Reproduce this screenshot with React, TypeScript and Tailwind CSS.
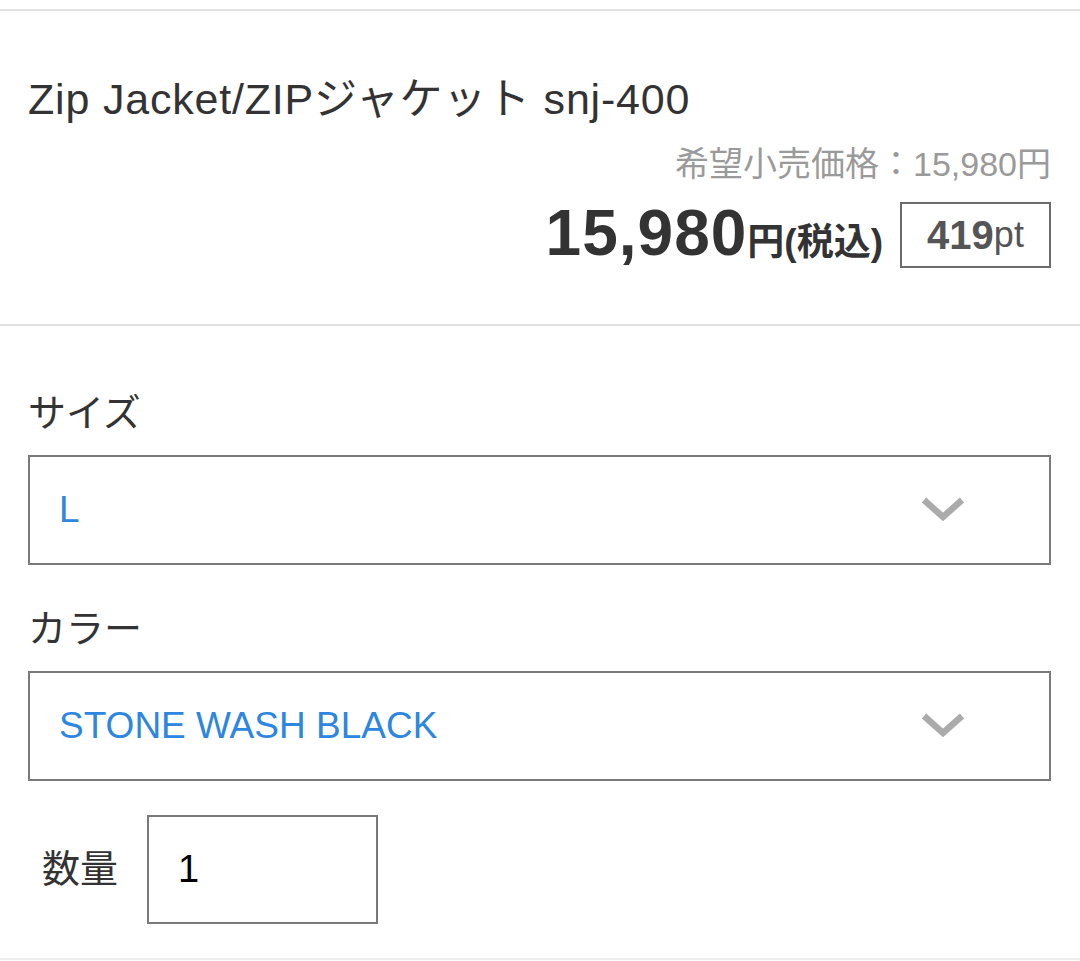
import React from "react";

const Chevron = () => (
  <svg width="46" height="28" viewBox="0 0 46 28" className="shrink-0">
    <path d="M4 4 L23 21 L42 4" fill="none" stroke="#ababab" strokeWidth="6.5" strokeLinecap="butt" strokeLinejoin="miter" />
  </svg>
);

const Select = ({ value }: { value: string }) => (
  <div className="flex h-[110px] items-center justify-between border-2 border-[#7a7a7a] pl-[29px] pr-[83px]">
    <span className="text-[37px] leading-none text-[#2d86df]">{value}</span>
    <Chevron />
  </div>
);

export default function App() {
  return (
    <div
      className="w-[1080px] h-[961px] overflow-hidden bg-white text-[#333]"
      style={{ fontFamily: '"Liberation Sans", "Noto Sans CJK JP", sans-serif' }}
    >
      <div className="h-[9px]" />
      <div className="border-t-2 border-[#e0e0e0]" />
      <div className="px-[28px] pt-[63px] pb-[53px] pr-[29px]">
        <h1 className="text-[43px] leading-[50px] font-normal tracking-[0.8px] text-[#333]">Zip Jacket/ZIPジャケット snj-400</h1>
        <div className="mt-[20px] text-right text-[34px] leading-[40px] text-[#9a9a9a]">希望小売価格：15,980円</div>
        <div className="mt-[16px] flex items-center justify-end gap-[17px]">
          <div className="flex items-baseline font-bold text-[#333]">
            <span className="text-[64px] leading-[66px] tracking-[1px]">15,980</span>
            <span className="text-[37px]">円(税込)</span>
          </div>
          <div className="flex h-[66px] w-[151px] items-center justify-center border-2 border-[#6b6b6b] text-[#555]">
            <span className="text-[40px] font-bold">419</span>
            <span className="text-[36px]">pt</span>
          </div>
        </div>
      </div>
      <div className="border-t-2 border-[#e0e0e0]" />
      <div className="px-[28px] pr-[29px] pt-[63px]">
        <div className="text-[38px] leading-[48px]">サイズ</div>
        <div className="mt-[18px]">
          <Select value="L" />
        </div>
        <div className="mt-[40px] text-[38px] leading-[48px]">カラー</div>
        <div className="mt-[18px]">
          <Select value="STONE WASH BLACK" />
        </div>
        <div className="mt-[34px] flex items-center">
          <div className="w-[119px] pl-[14px] text-[38px] leading-[48px]">数量</div>
          <div className="flex h-[109px] w-[231px] items-center border-2 border-[#7a7a7a] pl-[29px] text-[38px] text-black">1</div>
        </div>
      </div>
      <div className="mt-[34px] border-t-2 border-[#eeeeee]" />
    </div>
  );
}
